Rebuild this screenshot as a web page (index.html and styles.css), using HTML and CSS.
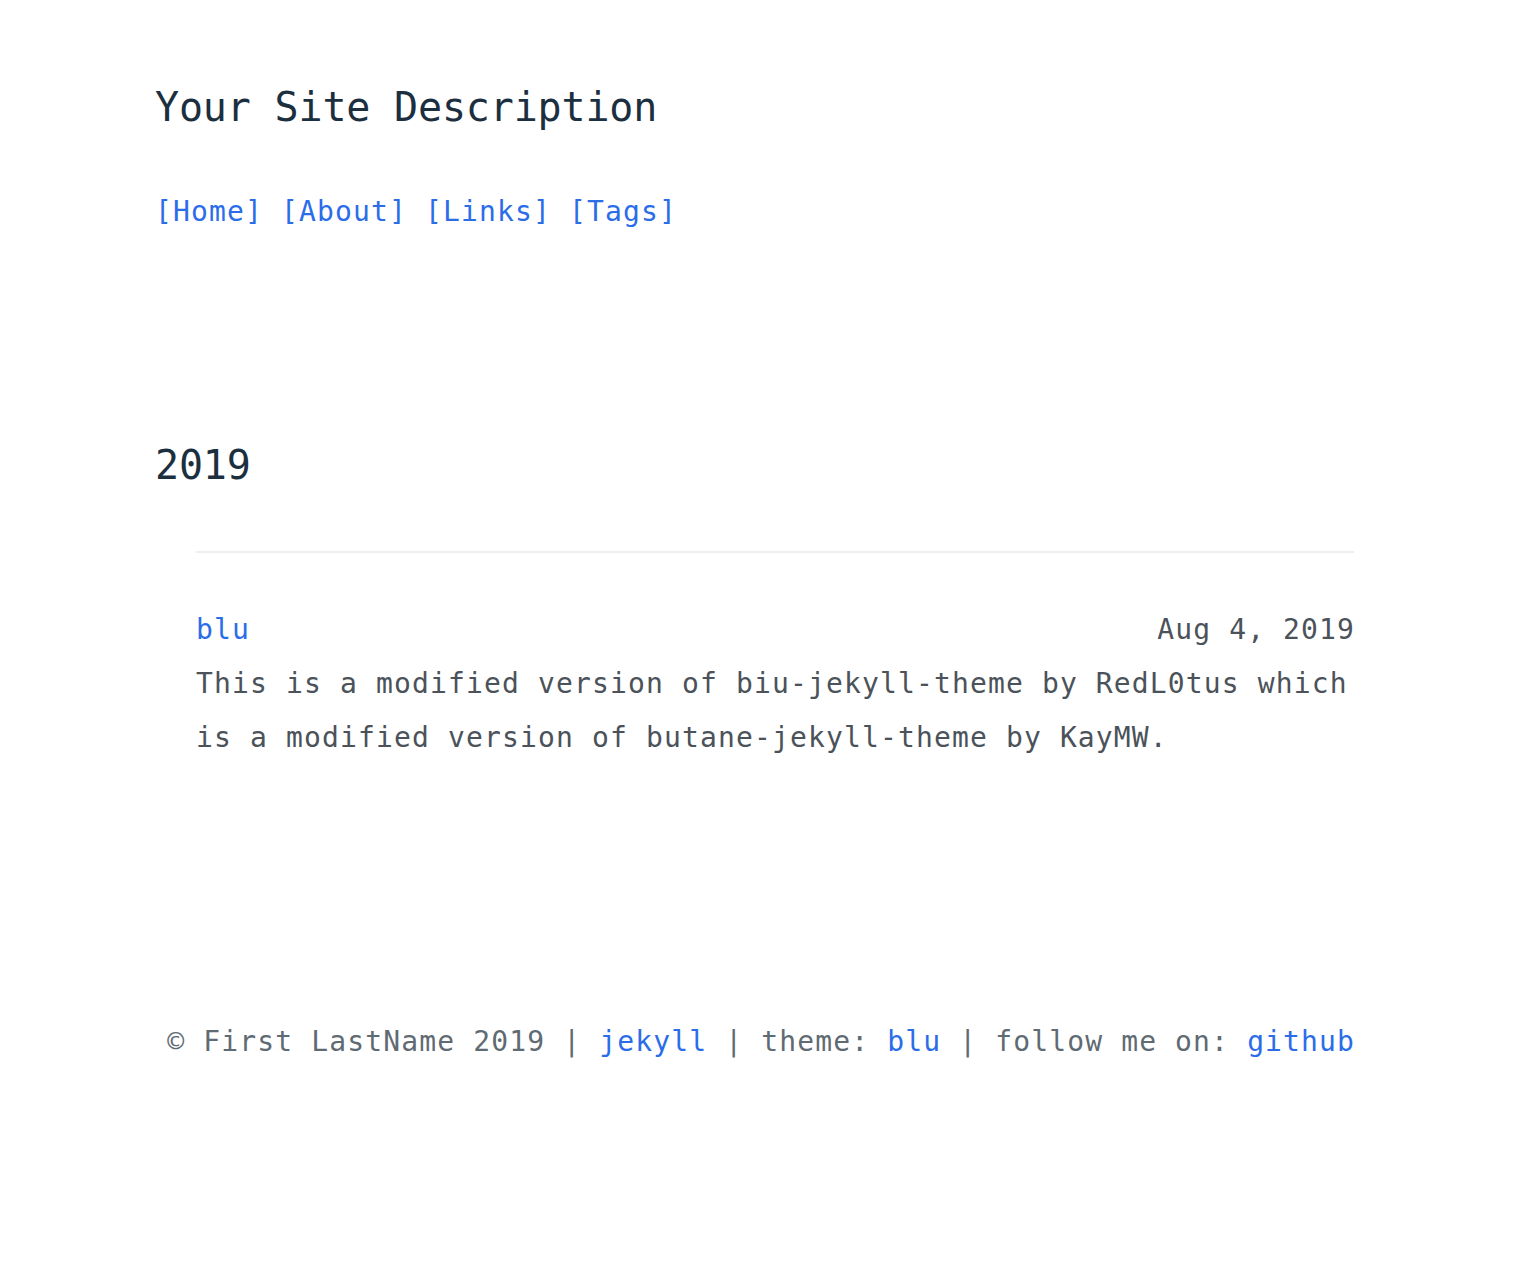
FILE: index.html
```html
<!DOCTYPE html>
<html lang="en">
<head>
<meta charset="utf-8">
<title>Your Site Description</title>
<link rel="stylesheet" href="styles.css">
</head>
<body>
<div class="wrap">
  <header class="site-header">
    <h1 class="site-title">Your Site Description</h1>
    <nav class="nav">
      <a href="#">[Home]</a> <a href="#">[About]</a> <a href="#">[Links]</a> <a href="#">[Tags]</a>
    </nav>
  </header>
  <main class="content">
    <h2 class="year">2019</h2>
    <ul class="posts">
      <li class="post">
        <div class="post-head">
          <a class="post-title" href="#">blu</a>
          <span class="post-date">Aug 4, 2019</span>
        </div>
        <p class="post-excerpt">This is a modified version of biu-jekyll-theme by RedL0tus which is a modified version of butane-jekyll-theme by KayMW.</p>
      </li>
    </ul>
  </main>
  <footer class="footer">
    © First LastName 2019 | <a href="#">jekyll</a> | theme: <a href="#">blu</a> | follow me on: <a href="#">github</a>
  </footer>
</div>
</body>
</html>
```
FILE: styles.css
```css
html, body {
  margin: 0;
  padding: 0;
  background: #ffffff;
}
body {
  font-family: "DejaVu Sans Mono", "Liberation Mono", monospace;
  font-size: 28px;
  letter-spacing: 1.14px;
  color: #4b525a;
}
a {
  color: #2b6de8;
  text-decoration: none;
}
.wrap {
  width: 1199px;
  margin-left: 155px;
}
.site-header {
  padding-top: 83px;
}
.site-title {
  margin: 0;
  font-size: 40px;
  font-weight: normal;
  letter-spacing: -0.17px;
  line-height: 48px;
  color: #1c2f3f;
}
.nav {
  margin-top: 57px;
  line-height: 48px;
}
.content {
  margin-top: 205px;
}
.year {
  margin: 0;
  font-size: 40px;
  font-weight: normal;
  letter-spacing: -0.17px;
  line-height: 48px;
  color: #1c2f3f;
}
.posts {
  list-style: none;
  margin: 62px 0 0 41px;
  padding: 0;
}
.post {
  border-top: 2px solid #eeeeee;
  padding-top: 50px;
}
.post-head {
  display: flex;
  justify-content: space-between;
  line-height: 54px;
}
.post-date {
  margin-right: -1.14px;
}
.post-excerpt {
  margin: 0;
  line-height: 54px;
}
.footer {
  margin-top: 250px;
  text-align: right;
  line-height: 54px;
  color: #5f6b73;
  margin-right: -1.14px;
  padding-bottom: 120px;
}
```
